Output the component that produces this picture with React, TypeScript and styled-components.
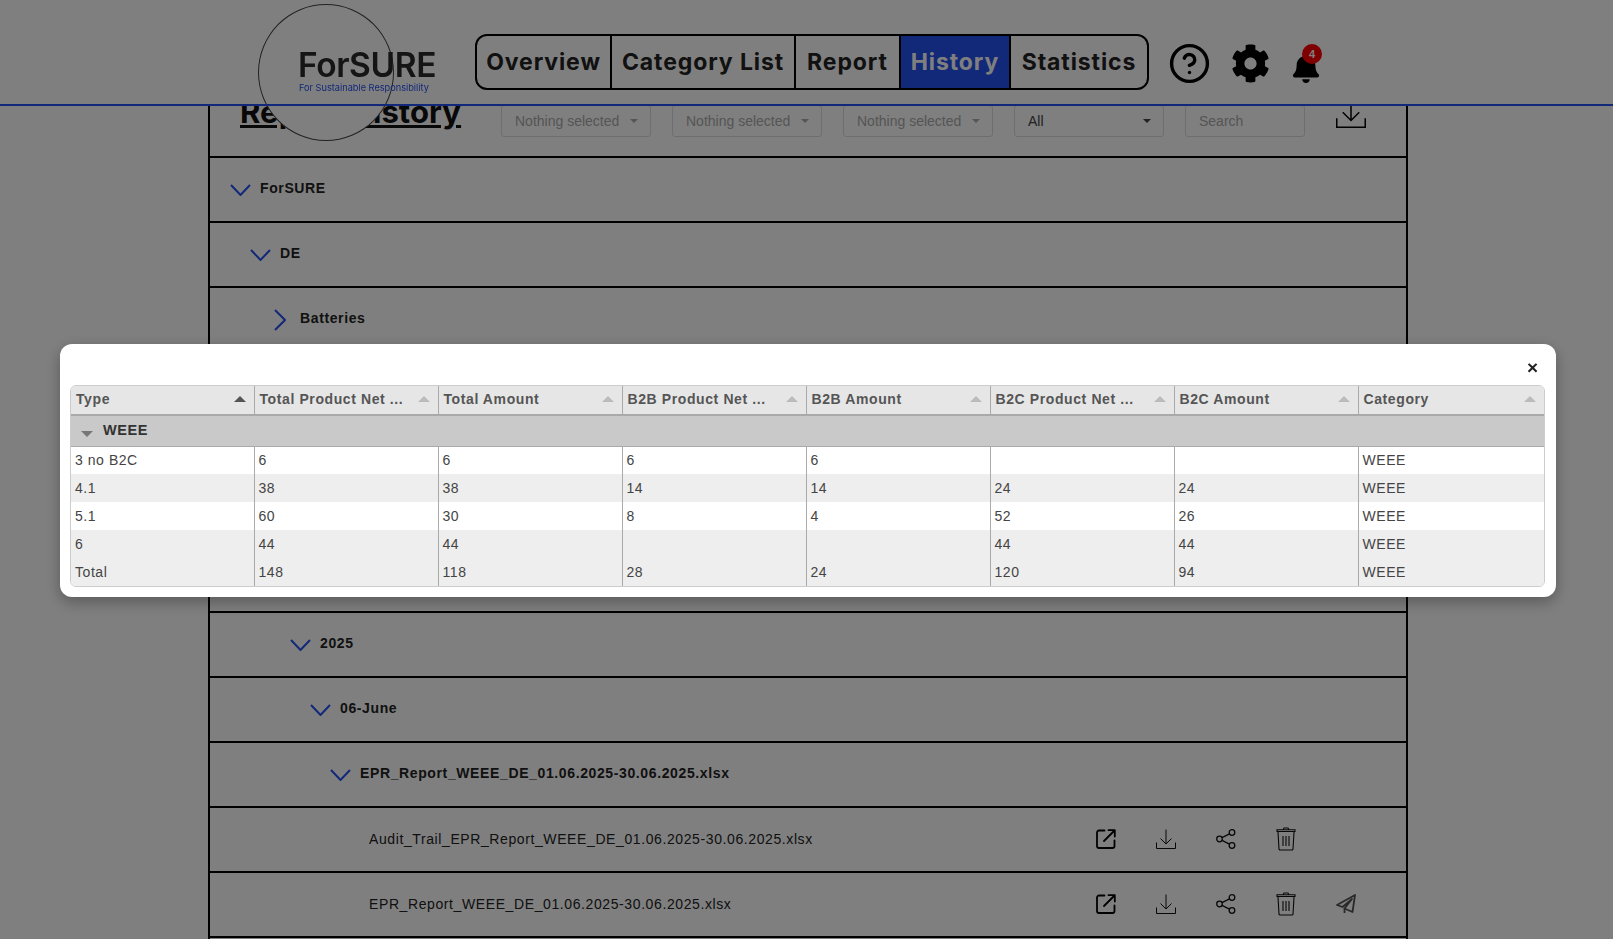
import React from 'react';
import styled, { createGlobalStyle } from 'styled-components';
import { CircleHelp } from 'lucide-react';
import { FaCog, FaBell } from 'react-icons/fa';

const GlobalStyle = createGlobalStyle`
  html, body {
    margin: 0;
    height: 100%;
    overflow: hidden;
    background: #fff;
    font-family: "Liberation Sans", Arial, sans-serif;
  }
`;

const BLUE = '#2450f0';

const Header = styled.header`
  position: fixed;
  top: 0;
  left: 0;
  right: 0;
  height: 105px;
  background: #fff;
  display: flex;
  align-items: flex-start;
  padding-left: 258px;
  z-index: 5;

  &::after {
    content: '';
    position: absolute;
    left: 0;
    right: 0;
    bottom: -1px;
    height: 2px;
    background: ${BLUE};
  }
`;

const LogoCircle = styled.div`
  position: relative;
  flex: none;
  width: 136px;
  height: 137px;
  margin-top: 4px;
  box-sizing: border-box;
  border: 1px solid #444;
  border-radius: 50%;
  background: #fff;
`;

const LogoText = styled.div`
  position: absolute;
  left: 39px;
  top: 44px;
  white-space: nowrap;
  font-family: Inter, sans-serif;
  font-weight: 600;
  font-size: 33.5px;
  line-height: 33px;
  letter-spacing: -0.4px;
  color: #2a2a2a;
`;

const LogoSub = styled.div`
  position: absolute;
  left: 40px;
  top: 77px;
  white-space: nowrap;
  font-family: Inter, sans-serif;
  font-size: 9.2px;
  line-height: 12px;
  color: ${BLUE};
`;

const Nav = styled.nav`
  display: flex;
  margin: 34px 0 0 81px;
  height: 56px;
  box-sizing: border-box;
  border: 2px solid #000;
  border-radius: 12px;
  overflow: hidden;
`;

const NavItem = styled.a<{ $width: number; $active?: boolean }>`
  width: ${(p) => p.$width}px;
  box-sizing: border-box;
  display: flex;
  align-items: center;
  justify-content: center;
  font-family: Inter, sans-serif;
  font-weight: 700;
  font-size: 23px;
  letter-spacing: 0.9px;
  color: ${(p) => (p.$active ? '#fff' : '#222')};
  background: ${(p) => (p.$active ? BLUE : 'transparent')};
  & + & {
    border-left: 2px solid #000;
  }
`;

const HeaderIcons = styled.div`
  display: flex;
  align-items: center;
  margin: 44px 0 0 19px;
  height: 39px;
  color: #000;
`;

const BellWrap = styled.div`
  position: relative;
  margin-left: 21px;
  height: 39px;
  display: flex;
  align-items: flex-end;
`;

const Badge = styled.span`
  position: absolute;
  top: 0;
  left: 11px;
  width: 20px;
  height: 20px;
  border-radius: 50%;
  background: #f00;
  color: #fff;
  font-size: 11px;
  font-weight: 700;
  display: flex;
  align-items: center;
  justify-content: center;
`;

const Main = styled.main`
  width: 1200px;
  margin-left: 208px;
  padding-top: 90px;
`;

const Panel = styled.div`
  border-left: 2px solid #000;
  border-right: 2px solid #000;
`;

const Toolbar = styled.div`
  height: 66px;
  box-sizing: border-box;
  display: flex;
  align-items: flex-start;
  padding: 15px 0 0 30px;
`;

const Title = styled.h1`
  margin: -18px 0 0;
  width: 261px;
  flex: none;
  font-family: Inter, sans-serif;
  font-weight: 700;
  font-size: 31px;
  line-height: 50px;
  letter-spacing: 0.1px;
  color: #111;
  text-decoration: underline;
  white-space: nowrap;
`;

const SelectBox = styled.div<{ $value?: boolean }>`
  width: 150px;
  height: 32px;
  flex: none;
  margin-right: 21px;
  box-sizing: border-box;
  border: 1px solid #ddd;
  border-radius: 3px;
  padding: 0 12px 0 13px;
  display: flex;
  align-items: center;
  justify-content: space-between;
  font-size: 14px;
  color: ${(p) => (p.$value ? '#444' : '#aaa')};

  &::after {
    content: '';
    border-left: 4px solid transparent;
    border-right: 4px solid transparent;
    border-top: 4px solid currentColor;
  }
`;

const SearchBox = styled.div`
  width: 120px;
  height: 32px;
  flex: none;
  box-sizing: border-box;
  border: 1px solid #ddd;
  border-radius: 3px;
  padding-left: 13px;
  display: flex;
  align-items: center;
  font-size: 14px;
  color: #aaa;
`;

const ToolbarDownload = styled.div`
  margin: -7px 0 0 31px;
`;

const Row = styled.div<{ $indent: number }>`
  height: 65px;
  box-sizing: border-box;
  border-top: 2px solid #000;
  padding-left: ${(p) => 20 + p.$indent * 20}px;
  padding-bottom: 3px;
  display: flex;
  align-items: center;
  font-size: 14px;
  font-weight: 700;
  letter-spacing: 0.62px;
  color: #222;
`;

const LeafRow = styled(Row)`
  font-weight: 400;
  letter-spacing: 0.6px;
  padding-left: 159px;
  padding-bottom: 2px;
`;

const PanelEnd = styled.div`
  height: 1px;
  border-top: 2px solid #000;
`;

const Chevron = styled.span`
  flex: none;
  width: 30px;
  margin-top: 3px;
  display: flex;
  align-items: center;
  color: ${BLUE};
`;

const LeafName = styled.span`
  width: 727px;
  flex: none;
`;

const Actions = styled.div`
  display: flex;
  align-items: center;
`;

const ActionSlot = styled.div`
  width: 60px;
  display: flex;
  justify-content: flex-start;
  color: #111;
`;

const Overlay = styled.div`
  position: fixed;
  inset: 0;
  z-index: 10;
  background: rgba(0, 0, 0, 0.5);
  display: flex;
  align-items: flex-start;
  justify-content: flex-start;
  padding: 344px 0 0 60px;
`;

const Modal = styled.div`
  position: relative;
  width: 1496px;
  height: 253px;
  box-sizing: border-box;
  background: #fff;
  border-radius: 12px;
  padding: 41px 11px 10px 10px;
  box-shadow: 0 5px 15px rgba(0, 0, 0, 0.3);
`;

const CloseButton = styled.span`
  position: absolute;
  top: 13px;
  right: 18px;
  font-size: 19px;
  line-height: 22px;
  font-weight: 700;
  color: #222;
`;

const TableFrame = styled.div`
  border: 1px solid #ccc;
  border-radius: 6px;
  overflow: hidden;
`;

const Table = styled.table`
  width: 100%;
  table-layout: fixed;
  border-collapse: collapse;
  font-size: 14px;
  letter-spacing: 0.55px;
  color: #444;
`;

const Th = styled.th`
  width: 184px;
  height: 29px;
  padding: 0 5px 2px;
  box-sizing: border-box;
  background: #e6e6e6;
  border-bottom: 2px solid #aaa;
  border-left: 1px solid #aaa;
  text-align: left;
  font-weight: 700;
  color: #555;
  letter-spacing: 0.6px;
  &:first-child {
    width: 183px;
    border-left: 0;
  }
  &:last-child {
    width: auto;
  }
`;

const ThInner = styled.div`
  display: flex;
  align-items: center;
  justify-content: space-between;
  white-space: nowrap;
`;

const SortArrow = styled.span<{ $on?: boolean }>`
  flex: none;
  margin-right: 3px;
  border-left: 6px solid transparent;
  border-right: 6px solid transparent;
  border-bottom: 6px solid ${(p) => (p.$on ? '#555' : '#bbb')};
`;

const GroupCell = styled.td`
  height: 31px;
  box-sizing: border-box;
  background: #c9c9c9;
  border-bottom: 1px solid #aaa;
  padding: 0 0 2px 10px;
  font-size: 14.5px;
  font-weight: 700;
  color: #333;
  letter-spacing: 0.6px;
`;

const GroupArrow = styled.span`
  display: inline-block;
  margin-right: 10px;
  vertical-align: -2px;
  border-left: 6px solid transparent;
  border-right: 6px solid transparent;
  border-top: 6px solid #777;
`;

const DataRow = styled.tr<{ $alt: boolean }>`
  background: ${(p) => (p.$alt ? '#eee' : '#fff')};
`;

const Td = styled.td`
  height: 28px;
  padding: 0 4px;
  box-sizing: border-box;
  border-left: 1px solid #aaa;
  &:first-child {
    border-left: 0;
  }
`;

const ChevronDown = () => (
  <svg width="21" height="12" viewBox="0 0 21 12" fill="none" stroke="currentColor" strokeWidth="2">
    <polyline points="1,1 10.5,11 20,1" />
  </svg>
);

const ChevronRight = () => (
  <svg width="12" height="22" viewBox="0 0 12 22" fill="none" stroke="currentColor" strokeWidth="2" style={{ marginLeft: 4 }}>
    <polyline points="1,1 11,11 1,21" />
  </svg>
);

const OpenIcon = () => (
  <svg width="20" height="20" viewBox="0 0 20 20" fill="none" stroke="#000" strokeWidth="1.8" strokeLinecap="round" strokeLinejoin="round">
    <path d="M8.5 1.5H3a2 2 0 0 0-2 2V17a2 2 0 0 0 2 2h13.5a2 2 0 0 0 2-2v-5.5" />
    <path d="M8 12L18 2M12.5 1.2h6.3v6.3" />
  </svg>
);

const DownloadIcon = ({ size = 20 }: { size?: number }) => (
  <svg width={size} height={size} viewBox="0 0 20 20" fill="none" stroke="currentColor" strokeWidth="1">
    <path d="M10 0.5V15M4.5 9.5L10 15l5.5-5.5" />
    <path d="M0.5 13.5v6h19v-6" />
  </svg>
);

const ShareIcon = () => (
  <svg width="20" height="20" viewBox="0 0 20 20" fill="none" stroke="currentColor" strokeWidth="1.3">
    <circle cx="3.5" cy="10" r="2.8" />
    <circle cx="16" cy="3.5" r="2.8" />
    <circle cx="16" cy="16.5" r="2.8" />
    <path d="M6 8.7l7.5-3.9M6 11.3l7.5 3.9" />
  </svg>
);

const TrashIcon = () => (
  <svg width="20" height="24" viewBox="0 0 20 24" fill="none" stroke="currentColor" strokeWidth="1.1">
    <path d="M0.5 4.5h19M1 4.5V2.8h18v1.7M7 2.8L8 1h4l1 1.8" />
    <path d="M2 5l1 17.2a1 1 0 0 0 1 .8h12a1 1 0 0 0 1-.8L18 5" />
    <path d="M7 9v10M10 9v10M13 9v10" />
  </svg>
);

const SendIcon = () => (
  <svg width="20" height="20" viewBox="0 0 20 20" fill="none" stroke="#555" strokeWidth="1.8" strokeLinejoin="round">
    <path d="M19 1L1 11l5.5 2L16 5l-7.5 9.5L16.5 18z" />
    <path d="M8.5 14.5V19" />
  </svg>
);

const columns = ['Type', 'Total Product Net ...', 'Total Amount', 'B2B Product Net ...', 'B2B Amount', 'B2C Product Net ...', 'B2C Amount', 'Category'];

const data = [
  ['3 no B2C', '6', '6', '6', '6', '', '', 'WEEE'],
  ['4.1', '38', '38', '14', '14', '24', '24', 'WEEE'],
  ['5.1', '60', '30', '8', '4', '52', '26', 'WEEE'],
  ['6', '44', '44', '', '', '44', '44', 'WEEE'],
  ['Total', '148', '118', '28', '24', '120', '94', 'WEEE'],
];

const tree = [
  { name: 'ForSURE', indent: 0, open: true },
  { name: 'DE', indent: 1, open: true },
  { name: 'Batteries', indent: 2, open: false },
  { name: 'Packaging', indent: 2, open: false },
  { name: 'WEEE', indent: 2, open: true },
  { name: 'Monthly', indent: 2, open: true },
  { name: 'Reports', indent: 2, open: true },
  { name: '2025', indent: 3, open: true },
  { name: '06-June', indent: 4, open: true },
  { name: 'EPR_Report_WEEE_DE_01.06.2025-30.06.2025.xlsx', indent: 5, open: true },
];

const App: React.FC = () => {
  const files = [
    { name: 'Audit_Trail_EPR_Report_WEEE_DE_01.06.2025-30.06.2025.xlsx', send: false },
    { name: 'EPR_Report_WEEE_DE_01.06.2025-30.06.2025.xlsx', send: true },
  ];
  return (
    <>
      <GlobalStyle />
      <Header>
        <LogoCircle>
          <LogoText>ForSURE</LogoText>
          <LogoSub>For Sustainable Responsibility</LogoSub>
        </LogoCircle>
        <Nav>
          <NavItem $width={133}>Overview</NavItem>
          <NavItem $width={184}>Category List</NavItem>
          <NavItem $width={105}>Report</NavItem>
          <NavItem $width={110} $active>History</NavItem>
          <NavItem $width={138}>Statistics</NavItem>
        </Nav>
        <HeaderIcons>
          <CircleHelp size={43} strokeWidth={1.9} />
          <FaCog size={39} style={{ marginLeft: 20 }} />
          <BellWrap>
            <FaBell size={30} />
            <Badge>4</Badge>
          </BellWrap>
        </HeaderIcons>
      </Header>
      <Main>
        <Panel>
          <Toolbar>
            <Title>Report History</Title>
            <SelectBox>Nothing selected</SelectBox>
            <SelectBox>Nothing selected</SelectBox>
            <SelectBox>Nothing selected</SelectBox>
            <SelectBox $value>All</SelectBox>
            <SearchBox>Search</SearchBox>
            <ToolbarDownload>
              <DownloadIcon size={30} />
            </ToolbarDownload>
          </Toolbar>
          {tree.map((node) => (
            <Row key={node.name} $indent={node.indent}>
              <Chevron>{node.open ? <ChevronDown /> : <ChevronRight />}</Chevron>
              {node.name}
            </Row>
          ))}
          {files.map((file) => (
            <LeafRow key={file.name} $indent={6}>
              <LeafName>{file.name}</LeafName>
              <Actions>
                <ActionSlot><OpenIcon /></ActionSlot>
                <ActionSlot><DownloadIcon /></ActionSlot>
                <ActionSlot><ShareIcon /></ActionSlot>
                <ActionSlot><TrashIcon /></ActionSlot>
                {file.send && <ActionSlot><SendIcon /></ActionSlot>}
              </Actions>
            </LeafRow>
          ))}
          <PanelEnd />
        </Panel>
      </Main>
      <Overlay>
        <Modal>
          <CloseButton>×</CloseButton>
          <TableFrame>
            <Table>
              <thead>
                <tr>
                  {columns.map((col, i) => (
                    <Th key={col}>
                      <ThInner>
                        {col}
                        <SortArrow $on={i === 0} />
                      </ThInner>
                    </Th>
                  ))}
                </tr>
              </thead>
              <tbody>
                <tr>
                  <GroupCell colSpan={8}>
                    <GroupArrow />
                    WEEE
                  </GroupCell>
                </tr>
                {data.map((row, i) => (
                  <DataRow key={row[0]} $alt={i % 2 === 1 || i === 4}>
                    {row.map((cell, j) => (
                      <Td key={j}>{cell}</Td>
                    ))}
                  </DataRow>
                ))}
              </tbody>
            </Table>
          </TableFrame>
        </Modal>
      </Overlay>
    </>
  );
};

export default App;
